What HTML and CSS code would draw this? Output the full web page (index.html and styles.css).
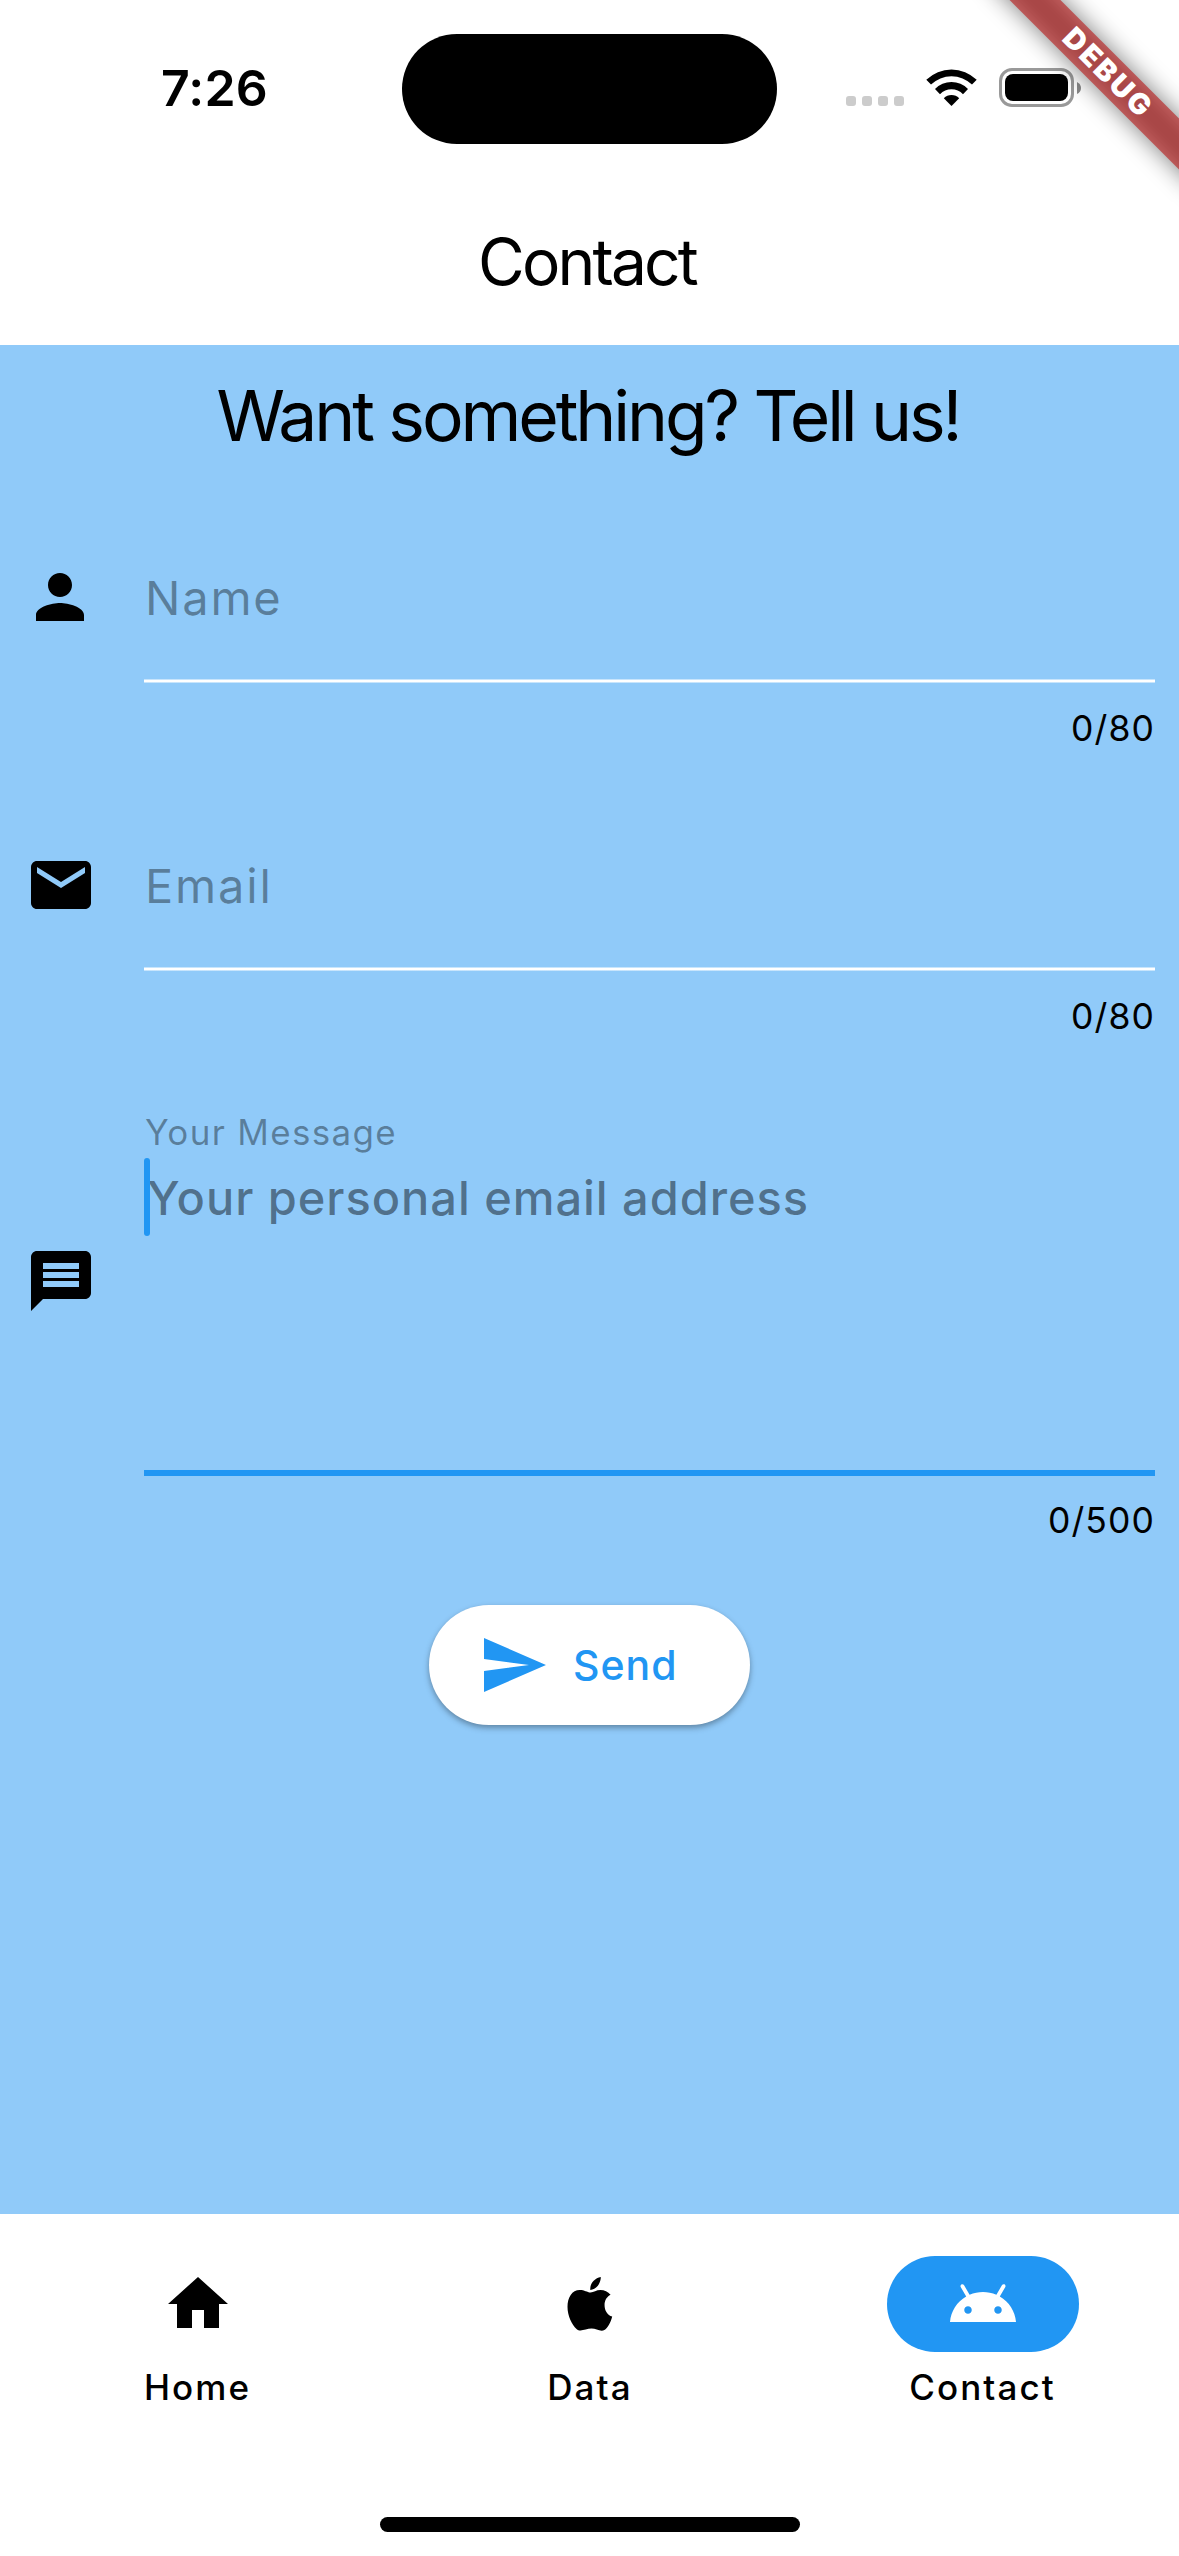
FILE: index.html
```html
<!DOCTYPE html>
<html lang="en">
<head>
<meta charset="utf-8">
<title>Contact</title>
<link rel="stylesheet" href="styles.css">
</head>
<body>
<div class="screen">
  <header class="header">
    <div class="status">
      <span class="time">7:26</span>
      <span class="island"></span>
      <div class="indicators">
        <div class="signal"><i></i><i></i><i></i><i></i></div>
        <svg class="wifi" viewBox="0 0 51 37"><path d="M0.3 10.8 A36 36 0 0 1 50.7 10.8 L46 15.6 A29.3 29.3 0 0 0 5 15.6Z"/><path d="M9 20 A23 23 0 0 1 42 20 L37 25.2 A16 16 0 0 0 14 25.2Z"/><path d="M17.8 29.2 A11 11 0 0 1 33.2 29.2 L25.5 37Z"/></svg>
        <div class="battery"><div class="shell"><div class="charge"></div></div><svg class="nub" viewBox="0 0 4 12"><path d="M0 0 Q4 2 4 6 Q4 10 0 12Z"/></svg></div>
      </div>
    </div>
    <h1 class="title"><span>Contact</span></h1>
  </header>

  <main class="body">
    <h2 class="heading"><span>Want something? Tell us!</span></h2>

    <div class="field">
      <svg class="icon person" viewBox="0 0 24 24"><path d="M12 12c2.21 0 4-1.79 4-4s-1.79-4-4-4-4 1.79-4 4 1.79 4 4 4zm0 2c-2.67 0-8 1.34-8 4v2h16v-2c0-2.66-5.33-4-8-4z"/></svg>
      <div class="control">
        <div class="input"><span class="label">Name</span></div>
        <div class="counter">0/80</div>
      </div>
    </div>

    <div class="field">
      <svg class="icon" viewBox="0 0 24 24"><path d="M20 4H4c-1.1 0-1.99.9-1.99 2L2 18c0 1.1.9 2 2 2h16c1.1 0 2-.9 2-2V6c0-1.1-.9-2-2-2zm0 4l-8 5-8-5V6l8 5 8-5v2z"/></svg>
      <div class="control">
        <div class="input"><span class="label">Email</span></div>
        <div class="counter">0/80</div>
      </div>
    </div>

    <div class="field message">
      <svg class="icon" viewBox="0 0 24 24"><path fill-rule="evenodd" d="M20 2H4c-1.1 0-2 .9-2 2v18l4-4h14c1.1 0 2-.9 2-2V4c0-1.1-.9-2-2-2zM6 6h12v2H6zM6 9h12v2H6zM6 12h12v2H6z"/></svg>
      <div class="control">
        <div class="input focused">
          <span class="small-label">Your Message</span>
          <div class="hint-row"><i class="cursor"></i><span class="hint">Your personal email address</span></div>
        </div>
        <div class="counter">0/500</div>
      </div>
    </div>

    <button class="send" type="button">
      <svg class="send-icon" viewBox="0 0 62 54"><path d="M0 0L62 27L0 54V33L45 27L0 21Z"/></svg>
      <span>Send</span>
    </button>
  </main>

  <nav class="nav">
    <div class="tabs">
      <div class="tab">
        <div class="pill"><svg viewBox="0 0 24 24"><path d="M10 20v-6h4v6h5v-8h3L12 3 2 12h3v8z"/></svg></div>
        <span>Home</span>
      </div>
      <div class="tab">
        <div class="pill"><svg viewBox="0 0 24 24"><path d="M12.2 8.2C11 8 10.2 7.3 8.6 7.3C6 7.3 4.5 9.8 4.5 12.9C4.5 16 6 18.9 7.5 20.3C8.800 21.500 10.500 20.200 12.500 20.200C14.100 20.200 15.400 21.300 16.800 20.700C17.800 20.200 19 18 19.400 16.200C17.800 15.600 16.850 14.200 16.850 12.300C16.850 10.700 17.600 9.600 18.850 8.900C18 7.800 16.800 7.300 15.500 7.300C14.100 7.300 13.200 8 12.200 8.200ZM12.100 7.300C11.900 5.200 13.600 3.300 15.600 3C15.600 5.200 14 7.300 12.100 7.300Z"/></svg></div>
        <span>Data</span>
      </div>
      <div class="tab active">
        <div class="pill"><svg viewBox="0 0 24 24"><path d="M17.6 9.48l1.84-3.18c.16-.31.04-.69-.26-.85-.29-.15-.65-.06-.83.22l-1.88 3.24c-2.86-1.21-6.08-1.21-8.94 0L5.65 5.67c-.19-.29-.58-.38-.87-.2-.28.18-.37.54-.22.83L6.4 9.48C3.3 11.25 1.28 14.44 1 18h22c-.28-3.56-2.3-6.75-5.4-8.52zM7 15.25c-.69 0-1.25-.56-1.25-1.25s.56-1.25 1.25-1.25 1.25.56 1.25 1.25-.56 1.25-1.25 1.25zm10 0c-.69 0-1.25-.56-1.25-1.25s.56-1.25 1.25-1.25 1.25.56 1.25 1.25-.56 1.25-1.25 1.25z"/></svg></div>
        <span>Contact</span>
      </div>
    </div>
    <div class="home-bar"></div>
  </nav>

  <div class="ribbon"><div class="ribbon-shadow"></div><div class="ribbon-band"><span>DEBUG</span></div></div>
</div>
</body>
</html>
```

FILE: styles.css
```css
* { box-sizing: border-box; margin: 0; padding: 0; }
body { width: 1179px; height: 2556px; overflow: hidden; background: #fff; color: #000; font-family: Inter, "Liberation Sans", sans-serif; }
svg { display: block; fill: currentColor; }
.screen { position: relative; width: 1179px; height: 2556px; display: flex; flex-direction: column; overflow: hidden; }

.header { height: 345px; display: flex; flex-direction: column; }
.status { height: 177px; padding-top: 34px; display: grid; grid-template-columns: 402px 375px 402px; }
.time { height: 110px; line-height: 109px; padding-left: 161px; font-size: 50px; font-weight: 600; letter-spacing: .2px; }
.island { height: 110px; border-radius: 55px; background: #000; }
.indicators { height: 110px; padding: 34px 0 0 69px; display: flex; align-items: flex-start; }
.signal { display: flex; gap: 6px; padding-top: 28px; }
.signal i { width: 10px; height: 10px; border-radius: 3px; background: #ccc; }
.wifi { width: 51px; height: 37px; margin: 1px 22px 0 22px; }
.battery { display: flex; align-items: center; gap: 3px; }
.shell { width: 75px; height: 39px; padding: 3px; border: 3px solid #999; border-radius: 13px; }
.charge { height: 27px; border-radius: 8px; background: #000; }
.nub { width: 4px; height: 12px; color: #888; }
.title { height: 168px; padding: 2px 5px 0 0; display: flex; justify-content: center; align-items: center; line-height: 84px; font-size: 64px; font-weight: 400; letter-spacing: -2.8px; }

.body { height: 1869px; background: #90caf9; display: flex; flex-direction: column; align-items: center; }
.heading { height: 192px; padding: 28px 3px 0 0; line-height: 86px; font-size: 69.5px; font-weight: 400; letter-spacing: -3.1px; white-space: nowrap; }
.field { width: 1179px; height: 288px; padding-right: 24px; display: flex; }
.icon { flex: none; width: 72px; height: 72px; margin: 24px 47px 0 25px; }
.person { margin: 24px 48px 0 24px; }
.control { flex: 1; }
.input { height: 146px; padding-left: 1px; background: linear-gradient(rgba(255, 255, 255, .5) 1px, #fff 1px, #fff 3px, rgba(255, 255, 255, .5) 3px) bottom / 100% 4px no-repeat; }
.label { display: block; padding-top: 32px; line-height: 58px; font-size: 47px; font-weight: 400; letter-spacing: 1.8px; color: rgba(0, 0, 0, .38); }
.counter { height: 60px; padding-top: 24px; line-height: 44px; text-align: right; font-size: 35.5px; letter-spacing: 1.1px; }
.message { height: 492px; }
.message .icon { margin-top: 132px; }
.input.focused { height: 363px; padding: 0; background: none; border-bottom: 6px solid #2196f3; display: flex; flex-direction: column; }
.message .counter { padding-top: 23px; }
.small-label { height: 46px; margin-top: -3px; padding-left: 1px; line-height: 44px; font-size: 35px; letter-spacing: 1.3px; color: rgba(0, 0, 0, .38); }
.hint-row { position: relative; height: 78px; margin-top: 2px; }
.cursor { position: absolute; left: 0; top: 0; width: 6px; height: 78px; border-radius: 3px; background: #2196f3; }
.hint { display: block; padding-left: 3px; line-height: 80px; font-size: 47px; font-weight: 500; letter-spacing: .95px; color: rgba(0, 0, 0, .45); white-space: nowrap; }
.send { width: 321px; height: 120px; padding-left: 55px; display: flex; align-items: center; gap: 27px; border: 0; border-radius: 60px; background: #fff; color: #2196f3; font: 450 41px/50px Inter, sans-serif; letter-spacing: 1px; box-shadow: 0 3px 6px rgba(0, 0, 0, .28), 0 2px 4px rgba(0, 0, 0, .08); }
.send-icon { width: 62px; height: 54px; }

.nav { height: 342px; padding-top: 42px; display: flex; flex-direction: column; align-items: center; }
.tabs { width: 1179px; height: 261px; padding-left: 1px; display: grid; grid-template-columns: 393px 392px 393px; }
.tab { display: flex; flex-direction: column; align-items: center; font-size: 35px; font-weight: 450; line-height: 44px; letter-spacing: 2.1px; }
.pill { width: 192px; height: 96px; margin-bottom: 13px; border-radius: 48px; display: flex; align-items: center; justify-content: center; }
.pill svg { width: 72px; height: 72px; }
.active .pill { background: #2196f3; color: #fff; }
.home-bar { width: 420px; height: 15px; border-radius: 8px; background: #000; }

/* debug ribbon lies over the top right corner */
.ribbon { position: absolute; left: 957px; top: 54px; width: 300px; height: 36px; transform: rotate(45deg); }
.ribbon-shadow { position: absolute; inset: 0; background: rgba(0, 0, 0, .5); filter: blur(12px); }
.ribbon-band { position: absolute; inset: 0; padding-left: 3px; background: rgba(183, 28, 28, .63); color: #fff; text-align: center; line-height: 36px; font-size: 29px; font-weight: 900; letter-spacing: 2.6px; }
```
